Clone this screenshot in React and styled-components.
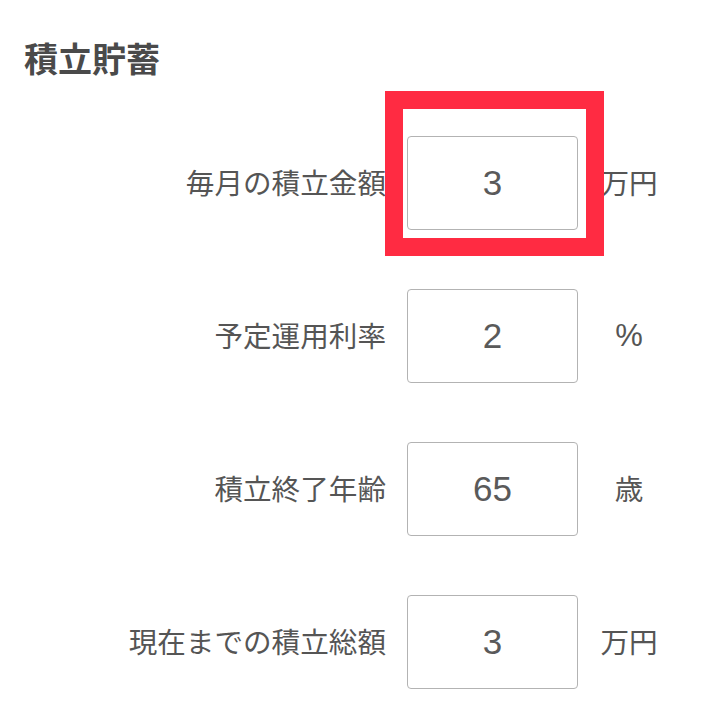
import React from "react";
import styled, { createGlobalStyle } from "styled-components";

const GlobalStyle = createGlobalStyle`
  body {
    margin: 0;
    background: #ffffff;
    font-family: "Noto Sans CJK JP", "Noto Sans", sans-serif;
    color: #555555;
  }
`;

const Page = styled.div`
  width: 703px;
  height: 701px;
  overflow: hidden;
`;

const Title = styled.h2`
  margin: 37px 0 0 24px;
  font-size: 34px;
  line-height: 41px;
  font-weight: 700;
  color: #4a4a4a;
`;

const Form = styled.div`
  display: flex;
  flex-direction: column;
  margin-top: 28px;
`;

const Row = styled.div`
  display: grid;
  grid-template-columns: 386px 171px 68px;
  column-gap: 21px;
  align-items: center;
  height: 153px;
`;

const Label = styled.label`
  text-align: right;
  font-size: 28.6px;
  line-height: 1;
  color: #555555;
  white-space: nowrap;
`;

const Field = styled.div`
  position: relative;
  height: 94px;
`;

const Input = styled.input`
  box-sizing: border-box;
  width: 171px;
  height: 94px;
  border: 1.5px solid #b3b3b3;
  border-radius: 4px;
  background: #fff;
  text-align: center;
  font-family: "Liberation Sans", Arial, sans-serif;
  font-size: 35px;
  color: #5a5a5a;
  outline: none;
  padding: 0;
`;

// red highlight frame drawn over the first field
const Highlight = styled.div`
  position: absolute;
  top: -45px;
  left: -22px;
  width: 219px;
  height: 165px;
  box-sizing: border-box;
  border: 18px solid #ff2b42;
  pointer-events: none;
`;

const Unit = styled.span`
  text-align: center;
  font-family: ${(p) =>
    p.$latin ? `"Liberation Sans", Arial, sans-serif` : "inherit"};
  font-size: ${(p) => (p.$latin ? "31px" : "28.6px")};
  line-height: 1;
  color: #555555;
  margin-left: -8px;
`;

const rows = [
  { label: "毎月の積立金額", value: "3", unit: "万円", highlight: true },
  { label: "予定運用利率", value: "2", unit: "%", latin: true },
  { label: "積立終了年齢", value: "65", unit: "歳" },
  { label: "現在までの積立総額", value: "3", unit: "万円" },
];

export default function App() {
  return (
    <Page>
      <GlobalStyle />
      <Title>積立貯蓄</Title>
      <Form>
        {rows.map((r, i) => (
          <Row key={i}>
            <Label>{r.label}</Label>
            <Field>
              <Input type="text" defaultValue={r.value} />
              {r.highlight && <Highlight />}
            </Field>
            <Unit $latin={r.latin}>{r.unit}</Unit>
          </Row>
        ))}
      </Form>
    </Page>
  );
}
